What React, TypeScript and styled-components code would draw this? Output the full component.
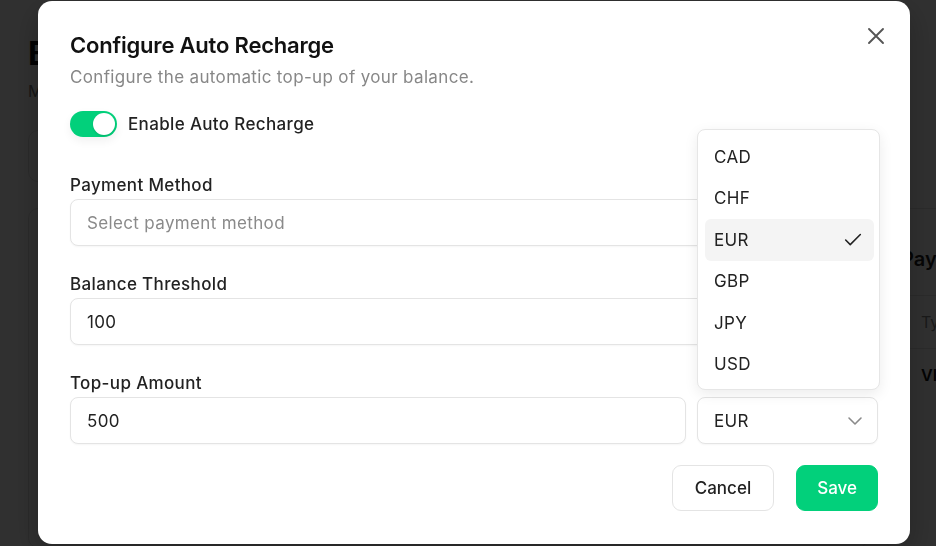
import { useState } from 'react';
import styled, { createGlobalStyle } from 'styled-components';

const GlobalStyle = createGlobalStyle`
	* { box-sizing: border-box; }
	html, body { margin: 0; padding: 0; height: 100%; }
	body {
		font-family: Inter, "Noto Sans", "Liberation Sans", sans-serif;
		background: #ffffff;
		color: #1c1c1c;
		overflow: hidden;
	}
`;

// page behind the dialog
const Page = styled.div`
	width: 1300px;
	height: 546px;
	padding: 28px 28px;
	background: #ffffff;
`;

const PageTitle = styled.h1`
	margin: 6px 0 0;
	font-size: 32px;
	font-weight: 700;
	line-height: 40px;
	color: #111;
`;

const PageSubtitle = styled.p`
	margin: 6px 0 0;
	font-size: 16px;
	line-height: 22px;
	color: #777;
`;

const BalanceCard = styled.div`
	margin-top: 28px;
	width: 840px;
	height: 52px;
	border: 1px solid #e3e3e3;
	border-radius: 10px;
`;

const CardGrid = styled.div`
	margin-top: 26px;
	display: grid;
	grid-template-columns: 840px 400px;
	gap: 16px;
`;

const Card = styled.div`
	border: 1px solid #e3e3e3;
	border-radius: 10px;
	height: 340px;
	padding: 30px 16px;
`;

const CardTitle = styled.h3`
	margin: 8px 0 24px;
	font-size: 20px;
	font-weight: 600;
`;

const TableRow = styled.div<{ $head?: boolean }>`
	border-top: 1px solid #e3e3e3;
	padding: 16px 20px;
	font-size: 16px;
	font-weight: ${p => (p.$head ? 400 : 600)};
	color: ${p => (p.$head ? '#888' : '#111')};
`;

const CardNote = styled.p`
	margin: 264px 0 0 420px;
	font-size: 16px;
	color: #555;
`;

// dialog
const Overlay = styled.div`
	position: fixed;
	inset: 0;
	background: rgba(0, 0, 0, 0.81);
`;

const Dialog = styled.div`
	position: fixed;
	left: 38px;
	top: 1px;
	width: 872px;
	height: 543px;
	background: #ffffff;
	border-radius: 14px;
	padding: 30px 32px 32px;
	display: flex;
	flex-direction: column;
	box-shadow: 0 10px 30px rgba(0, 0, 0, 0.25);
`;

const Title = styled.h2`
	margin: 0;
	font-size: 22px;
	line-height: 28px;
	font-weight: 600;
	color: #111;
	letter-spacing: -0.2px;
`;

const Description = styled.p`
	margin: 8px 0 0;
	font-size: 17px;
	line-height: 20px;
	letter-spacing: 0.35px;
	color: #878787;
`;

const CloseButton = styled.button`
	position: absolute;
	top: 25px;
	right: 24px;
	width: 20px;
	height: 20px;
	padding: 0;
	border: none;
	background: none;
	color: #555;
	display: flex;
	align-items: center;
	justify-content: center;
	cursor: pointer;
`;

const ToggleRow = styled.label`
	margin-top: 24px;
	display: flex;
	align-items: center;
	gap: 11px;
	font-size: 17px;
	font-weight: 500;
	letter-spacing: 0.35px;
	color: #222;
`;

const Track = styled.span<{ $on: boolean }>`
	width: 47px;
	height: 26px;
	border-radius: 13px;
	padding: 2px;
	display: flex;
	justify-content: ${p => (p.$on ? 'flex-end' : 'flex-start')};
	background: ${p => (p.$on ? '#02d07b' : '#dcdcdc')};
	box-shadow: 0 4px 10px rgba(0, 0, 0, 0.06);
`;

const Knob = styled.span`
	width: 22px;
	height: 22px;
	border-radius: 50%;
	background: #ffffff;
	box-shadow: 0 1px 2px rgba(0, 0, 0, 0.15);
`;

const Field = styled.div<{ $top: number }>`
	margin-top: ${p => p.$top}px;
	display: flex;
	flex-direction: column;
	gap: 4px;
`;

const Label = styled.span`
	font-size: 17px;
	line-height: 20px;
	font-weight: 500;
	letter-spacing: 0.35px;
	color: #222;
`;

const Input = styled.div<{ $placeholder?: boolean }>`
	height: 47px;
	border: 1px solid #e4e4e4;
	border-radius: 8px;
	padding: 0 16px;
	display: flex;
	align-items: center;
	justify-content: space-between;
	font-size: 17px;
	letter-spacing: 0.35px;
	color: ${p => (p.$placeholder ? '#8a8a8a' : '#222')};
	background: #fff;
	box-shadow: 0 1px 2px rgba(0, 0, 0, 0.04);
`;

const AmountRow = styled.div`
	display: grid;
	grid-template-columns: 1fr 181px;
	gap: 11px;
`;

const Footer = styled.div`
	margin-top: 21px;
	display: flex;
	justify-content: flex-end;
	gap: 22px;
`;

const Button = styled.button<{ $primary?: boolean }>`
	height: 46px;
	padding: 0 ${p => (p.$primary ? 20 : 22)}px;
	border-radius: 9px;
	font-family: inherit;
	font-size: 17px;
	font-weight: 500;
	border: 1px solid ${p => (p.$primary ? '#02d07b' : '#e4e4e4')};
	background: ${p => (p.$primary ? '#02d07b' : '#ffffff')};
	color: ${p => (p.$primary ? '#ffffff' : '#222')};
`;

const Menu = styled.div`
	position: absolute;
	left: 659px;
	top: 128px;
	width: 183px;
	padding: 6px 5px 4px 7px;
	background: #ffffff;
	border: 1px solid #e6e6e6;
	border-radius: 8px;
	box-shadow: 0 4px 14px rgba(0, 0, 0, 0.08);
`;

const MenuItem = styled.div<{ $active?: boolean }>`
	height: 41.5px;
	padding: 0 10px 0 9px;
	border-radius: 6px;
	display: flex;
	align-items: center;
	justify-content: space-between;
	font-size: 17px;
	letter-spacing: 0.3px;
	color: #222;
	background: ${p => (p.$active ? '#f4f4f4' : 'transparent')};
`;

const currencies = ['CAD', 'CHF', 'EUR', 'GBP', 'JPY', 'USD'];

export default function App() {
	const [enabled] = useState(true);
	const [currency] = useState('EUR');

	return (
		<>
			<GlobalStyle />
			<Page>
				<PageTitle>Billing</PageTitle>
				<PageSubtitle>Manage your balance and payment methods</PageSubtitle>
				<BalanceCard />
				<CardGrid>
					<Card>
						<CardNote>Automatically top up when your balance falls low</CardNote>
					</Card>
					<Card>
						<CardTitle>Payment Methods</CardTitle>
						<TableRow $head>Type</TableRow>
						<TableRow>VISA</TableRow>
					</Card>
				</CardGrid>
			</Page>
			<Overlay />
			<Dialog>
				<Title>Configure Auto Recharge</Title>
				<Description>Configure the automatic top-up of your balance.</Description>
				<CloseButton aria-label="Close">
					<svg width="18" height="18" viewBox="0 0 18 18" fill="none" stroke="currentColor" strokeWidth="1.9" strokeLinecap="round">
						<path d="M2 2 16 16M16 2 2 16" />
					</svg>
				</CloseButton>

				<ToggleRow>
					<Track $on={enabled}>
						<Knob />
					</Track>
					Enable Auto Recharge
				</ToggleRow>

				<Field $top={38}>
					<Label>Payment Method</Label>
					<Input $placeholder>Select payment method</Input>
				</Field>

				<Field $top={28}>
					<Label>Balance Threshold</Label>
					<Input>100</Input>
				</Field>

				<Field $top={28}>
					<Label>Top-up Amount</Label>
					<AmountRow>
						<Input>500</Input>
						<Input>
							{currency}
							<svg width="24" height="24" viewBox="0 0 24 24" fill="none" stroke="#8a8a8a" strokeWidth="1.6" strokeLinecap="round" strokeLinejoin="round" style={{ marginRight: -6 }}>
								<path d="m6 9 6 6 6-6" />
							</svg>
						</Input>
					</AmountRow>
				</Field>

				<Footer>
					<Button>Cancel</Button>
					<Button $primary>Save</Button>
				</Footer>

				<Menu>
					{currencies.map(c => (
						<MenuItem key={c} $active={c === currency}>
							{c}
							{c === currency && (
								<svg width="22" height="22" viewBox="0 0 24 24" fill="none" stroke="#222" strokeWidth="1.7" strokeLinecap="round" strokeLinejoin="round">
									<path d="M20 6 9 17l-5-5" />
								</svg>
							)}
						</MenuItem>
					))}
				</Menu>
			</Dialog>
		</>
	);
}
